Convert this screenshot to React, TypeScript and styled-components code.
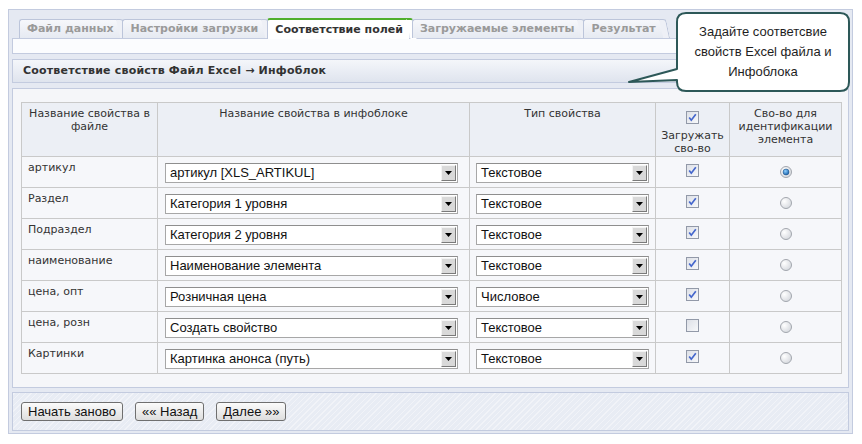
import React from 'react';
import styled, { createGlobalStyle, css } from 'styled-components';

const GlobalStyle = createGlobalStyle`
  html, body { margin: 0; padding: 0; background: #ffffff; }
  body { font-family: "DejaVu Sans", Verdana, sans-serif; }
  * { box-sizing: border-box; }
`;

const Page = styled.div`
  position: relative;
  width: 862px;
  height: 444px;
  padding: 9px 0 0 8px;
`;

const Panel = styled.div`
  width: 845px;
  height: 425px;
  border: 1px solid #c3cbdf;
  background: #e5e9f2;
  padding: 8px 3px 2px;
  display: flex;
  flex-direction: column;
`;

const TabBar = styled.div`
  display: flex;
  align-items: flex-end;
  gap: 3px;
  height: 20px;
  padding-left: 7px;
  position: relative;
  z-index: 1;
`;

const Tab = styled.div<{ $active?: boolean }>`
  position: relative;
  height: 19px;
  padding: 0 6px 0 7px;
  font-size: 11px;
  font-weight: bold;
  line-height: 18px;
  color: #9a9a9a;
  white-space: nowrap;
  border: 1px solid #bcc5da;
  border-right: none;
  border-bottom: none;
  border-radius: 3px 0 0 0;
  background: linear-gradient(#f6f7fb, #e6eaf2);
  &::after {
    content: '';
    position: absolute;
    top: -1px;
    bottom: 0;
    right: -4px;
    width: 6px;
    border-top: 1px solid #bcc5da;
    border-right: 1px solid #bcc5da;
    border-radius: 0 3px 0 0;
    background: #eef0f6;
    transform: skewX(12deg);
    transform-origin: top left;
  }
  ${(p) =>
    p.$active &&
    css`
      height: 21px;
      margin-bottom: -1px;
      color: #333333;
      background: #ffffff;
      border-top: 2px solid #4fae2c;
      line-height: 19px;
      &::after {
        top: -2px;
        border-top: 2px solid #4fae2c;
        background: #ffffff;
      }
    `}
`;

const Strip = styled.div`
  height: 16px;
  border: 1px solid #c3cbdf;
  background: #fbfcfe;
`;

const SectionHeader = styled.div`
  margin-top: 5px;
  height: 24px;
  border: 1px solid #c3cbdf;
  background: linear-gradient(#f4f6fa, #dfe4ee);
  padding-left: 10px;
  font-size: 11px;
  font-weight: bold;
  letter-spacing: 0.2px;
  line-height: 22px;
  color: #333333;
`;

const Content = styled.div`
  margin-top: 5px;
  height: 300px;
  border: 1px solid #c3cbdf;
  background: #f5f6f9;
  padding: 13px 6px 0 8px;
`;

const Table = styled.table`
  width: 820px;
  table-layout: fixed;
  border-collapse: collapse;
  font-size: 11px;
  line-height: 13px;
  color: #333333;
  border: 1px solid #c9c9c9;
`;

const HeadCell = styled.th`
  height: 54px;
  padding: 4px 4px 0;
  font-weight: normal;
  text-align: center;
  vertical-align: top;
  background: #eceff5;
  border: 1px solid #c9c9c9;
`;

const Cell = styled.td<{ $center?: boolean; $pad?: number }>`
  height: 31px;
  padding: 4px 6px 0 ${(p) => (p.$pad ?? 6)}px;
  vertical-align: top;
  text-align: ${(p) => (p.$center ? 'center' : 'left')};
  background: #f6f7fa;
  border: 1px solid #c9c9c9;
`;

const Select = styled.div<{ $w: number }>`
  display: flex;
  align-items: stretch;
  width: ${(p) => p.$w}px;
  height: 20px;
  margin-top: 2px;
  border: 1px solid #a7a7a7;
  border-top-color: #8e8e8e;
  background: #ffffff;
  font-family: "Liberation Sans", Arial, sans-serif;
  font-size: 13px;
  line-height: 18px;
  color: #111111;
`;

const SelectText = styled.span`
  flex: 1;
  padding-left: 4px;
  white-space: nowrap;
  overflow: hidden;
`;

const SelectArrow = styled.span`
  width: 15px;
  margin: 1px;
  display: flex;
  align-items: center;
  justify-content: center;
  background: #d9d9d9;
  border: 1px solid;
  border-color: #f4f4f4 #7a7a7a #7a7a7a #f4f4f4;
`;

const CheckWrap = styled.span<{ $mt: number; $mb?: number }>`
  display: block;
  width: 13px;
  height: 13px;
  margin: ${(p) => p.$mt}px auto ${(p) => p.$mb ?? 0}px;
`;

const RadioWrap = styled.span`
  display: block;
  width: 12px;
  height: 12px;
  margin: 5px auto 0;
`;

const ButtonBar = styled.div`
  margin-top: 4px;
  height: 39px;
  border: 1px solid #c3cbdf;
  padding: 9px 8px 0;
  display: flex;
  align-items: flex-start;
  gap: 12px;
  background-color: #e8ecf4;
  background-image: repeating-linear-gradient(
    -45deg,
    #e8ecf4 0px,
    #e8ecf4 3px,
    #f1f3f8 3px,
    #f1f3f8 4px
  );
`;

const Button = styled.button`
  height: 19px;
  padding: 0 6px;
  border: 1px solid #6f6f6f;
  border-radius: 3px;
  background: linear-gradient(#fbfbfb, #dedede);
  font-family: "Liberation Sans", Arial, sans-serif;
  font-size: 13px;
  line-height: 16px;
  color: #111111;
`;

const Callout = styled.div`
  position: absolute;
  left: 625px;
  top: 11px;
  width: 228px;
  height: 82px;
`;

const CalloutShape = styled.svg`
  position: absolute;
  inset: 0;
`;

const CalloutText = styled.div`
  position: absolute;
  left: 52px;
  top: 2px;
  width: 172px;
  height: 78px;
  display: flex;
  flex-direction: column;
  align-items: center;
  justify-content: center;
  font-family: "Liberation Sans", Arial, sans-serif;
  font-size: 13px;
  line-height: 20px;
  color: #1e1e1e;
  text-align: center;
`;

const Checkbox = ({ checked }: { checked: boolean }) => (
  <svg width="13" height="13" viewBox="0 0 13 13">
    <defs>
      <linearGradient id="cbg" x1="0" y1="0" x2="1" y2="1">
        <stop offset="0" stopColor="#dcdfe6" />
        <stop offset="1" stopColor="#f8f9fb" />
      </linearGradient>
    </defs>
    <rect x="0.5" y="0.5" width="12" height="12" fill="url(#cbg)" stroke="#9299a8" />
    {checked && (
      <path d="M3.2 6.4 L5.3 9.2 L9.8 3.2" fill="none" stroke="#4466cc" strokeWidth="1.7" />
    )}
  </svg>
);

const Radio = ({ checked }: { checked: boolean }) => (
  <svg width="12" height="12" viewBox="0 0 12 12">
    <defs>
      <radialGradient id="rbg" cx="0.35" cy="0.35" r="0.75">
        <stop offset="0" stopColor="#ffffff" />
        <stop offset="1" stopColor="#d3d6dc" />
      </radialGradient>
      <radialGradient id="rdot" cx="0.4" cy="0.35" r="0.7">
        <stop offset="0" stopColor="#8fd0ff" />
        <stop offset="1" stopColor="#0f5aa6" />
      </radialGradient>
    </defs>
    <circle cx="6" cy="6" r="5.5" fill="url(#rbg)" stroke="#a3a7ae" />
    {checked && <circle cx="6" cy="6" r="3" fill="url(#rdot)" stroke="#1b4c80" strokeWidth="0.5" />}
  </svg>
);

const SelectBox = ({ value, width }: { value: string; width: number }) => (
  <Select $w={width}>
    <SelectText>{value}</SelectText>
    <SelectArrow>
      <svg width="7" height="4" viewBox="0 0 7 4">
        <path d="M0 0 H7 L3.5 4 Z" fill="#000" />
      </svg>
    </SelectArrow>
  </Select>
);

const rows = [
  { name: 'артикул', prop: 'артикул [XLS_ARTIKUL]', type: 'Текстовое', load: true, id: true },
  { name: 'Раздел', prop: 'Категория 1 уровня', type: 'Текстовое', load: true, id: false },
  { name: 'Подраздел', prop: 'Категория 2 уровня', type: 'Текстовое', load: true, id: false },
  { name: 'наименование', prop: 'Наименование элемента', type: 'Текстовое', load: true, id: false },
  { name: 'цена, опт', prop: 'Розничная цена', type: 'Числовое', load: true, id: false },
  { name: 'цена, розн', prop: 'Создать свойство', type: 'Текстовое', load: false, id: false },
  { name: 'Картинки', prop: 'Картинка анонса (путь)', type: 'Текстовое', load: true, id: false },
];

const tabs = ['Файл данных', 'Настройки загрузки', 'Соответствие полей', 'Загружаемые элементы', 'Результат'];

export default function App() {
  return (
    <Page>
      <GlobalStyle />
      <Panel>
        <TabBar>
          {tabs.map((t, i) => (
            <Tab key={t} $active={i === 2}>
              {t}
            </Tab>
          ))}
        </TabBar>
        <Strip />
        <SectionHeader>Соответствие свойств Файл Excel → Инфоблок</SectionHeader>
        <Content>
          <Table>
            <colgroup>
              <col style={{ width: 136 }} />
              <col style={{ width: 312 }} />
              <col style={{ width: 186 }} />
              <col style={{ width: 74 }} />
              <col style={{ width: 112 }} />
            </colgroup>
            <thead>
              <tr>
                <HeadCell>Название свойства в файле</HeadCell>
                <HeadCell>Название свойства в инфоблоке</HeadCell>
                <HeadCell>Тип свойства</HeadCell>
                <HeadCell>
                  <CheckWrap $mt={4} $mb={5}>
                    <Checkbox checked />
                  </CheckWrap>
                  Загружать сво-во
                </HeadCell>
                <HeadCell>Сво-во для идентификации элемента</HeadCell>
              </tr>
            </thead>
            <tbody>
              {rows.map((r) => (
                <tr key={r.name}>
                  <Cell>{r.name}</Cell>
                  <Cell $pad={7}>
                    <SelectBox value={r.prop} width={293} />
                  </Cell>
                  <Cell $pad={6}>
                    <SelectBox value={r.type} width={173} />
                  </Cell>
                  <Cell $center>
                    <CheckWrap $mt={3}>
                      <Checkbox checked={r.load} />
                    </CheckWrap>
                  </Cell>
                  <Cell $center>
                    <RadioWrap>
                      <Radio checked={r.id} />
                    </RadioWrap>
                  </Cell>
                </tr>
              ))}
            </tbody>
          </Table>
        </Content>
        <ButtonBar>
          <Button>Начать заново</Button>
          <Button>«« Назад</Button>
          <Button>Далее »»</Button>
        </ButtonBar>
      </Panel>
      <Callout>
        <CalloutShape width="228" height="82" viewBox="0 0 228 82">
          <path
            d="M61 2 H215 Q224 2 224 11 V71 Q224 80 215 80 H61 Q52 80 52 71 V69 L4 71 L52 58 V11 Q52 2 61 2 Z"
            fill="#ffffff"
            stroke="#2d5858"
            strokeWidth="2"
            strokeLinejoin="round"
          />
        </CalloutShape>
        <CalloutText>
          <span>Задайте соответсвие</span>
          <span>свойств Excel файла и</span>
          <span>Инфоблока</span>
        </CalloutText>
      </Callout>
    </Page>
  );
}
